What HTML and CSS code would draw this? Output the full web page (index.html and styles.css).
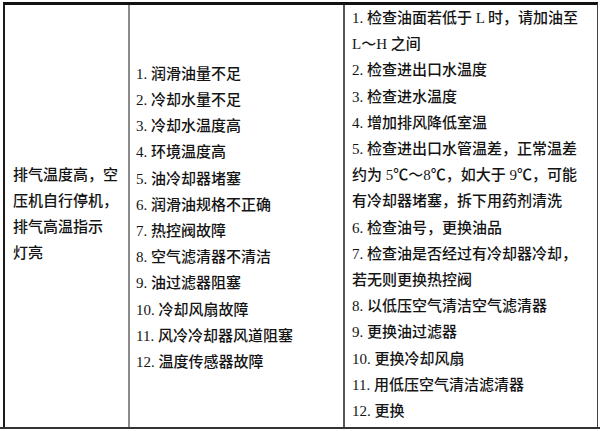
FILE: index.html
```html
<!DOCTYPE html>
<html lang="zh">
<head>
<meta charset="utf-8">
<link rel="stylesheet" href="styles.css">
</head>
<body>
<div class="page">
  <div class="table">
    <div class="cell c1">排气温度高，空<br>压机自行停机，<br>排气高温指示<br>灯亮</div>
    <div class="cell c2">1. 润滑油量不足<br>2. 冷却水量不足<br>3. 冷却水温度高<br>4. 环境温度高<br>5. 油冷却器堵塞<br>6. 润滑油规格不正确<br>7. 热控阀故障<br>8. 空气滤清器不清洁<br>9. 油过滤器阻塞<br>10. 冷却风扇故障<br>11. 风冷冷却器风道阻塞<br>12. 温度传感器故障</div>
    <div class="cell c3">1. 检查油面若低于 L 时，请加油至<br>L～H 之间<br>2. 检查进出口水温度<br>3. 检查进水温度<br>4. 增加排风降低室温<br>5. 检查进出口水管温差，正常温差<br>约为 5℃～8℃，如大于 9℃，可能<br>有冷却器堵塞，拆下用药剂清洗<br>6. 检查油号，更换油品<br>7. 检查油是否经过有冷却器冷却，<br>若无则更换热控阀<br>8. 以低压空气清洁空气滤清器<br>9. 更换油过滤器<br>10. 更换冷却风扇<br>11. 用低压空气清洁滤清器<br>12. 更换</div>
  </div>
  <div class="bottom-rule"></div>
</div>
</body>
</html>
```

FILE: styles.css
```css
html, body {
  margin: 0;
  padding: 0;
  background: #fff;
}
.page {
  width: 600px;
  height: 431px;
  padding-top: 2px;
  box-sizing: border-box;
}
.table {
  margin-left: 3px;
  width: 595px;
  height: 425px;
  box-sizing: border-box;
  display: grid;
  grid-template-columns: 123px 215px 1fr;
  border-top: 3px solid #111;
  border-left: 2px solid #1a1a1a;
  border-right: 1px solid #444;
  font-family: "Liberation Serif", "Noto Sans CJK SC", serif;
  font-size: 15px;
  font-weight: 500;
  line-height: 26.2px;
  color: #141414;
}
.cell {
  display: flex;
  align-items: center;
  white-space: nowrap;
}
.c1 {
  padding-left: 8px;
  padding-bottom: 4px;
}
.c2 {
  border-left: 2px solid #8a8a8a;
  padding-left: 6px;
  padding-top: 4px;
}
.c3 {
  border-left: 2px solid #555;
  padding-left: 7px;
  padding-top: 0;
  align-items: flex-start;
}
.bottom-rule {
  height: 2px;
  background: #333;
  width: 600px;
}
```
